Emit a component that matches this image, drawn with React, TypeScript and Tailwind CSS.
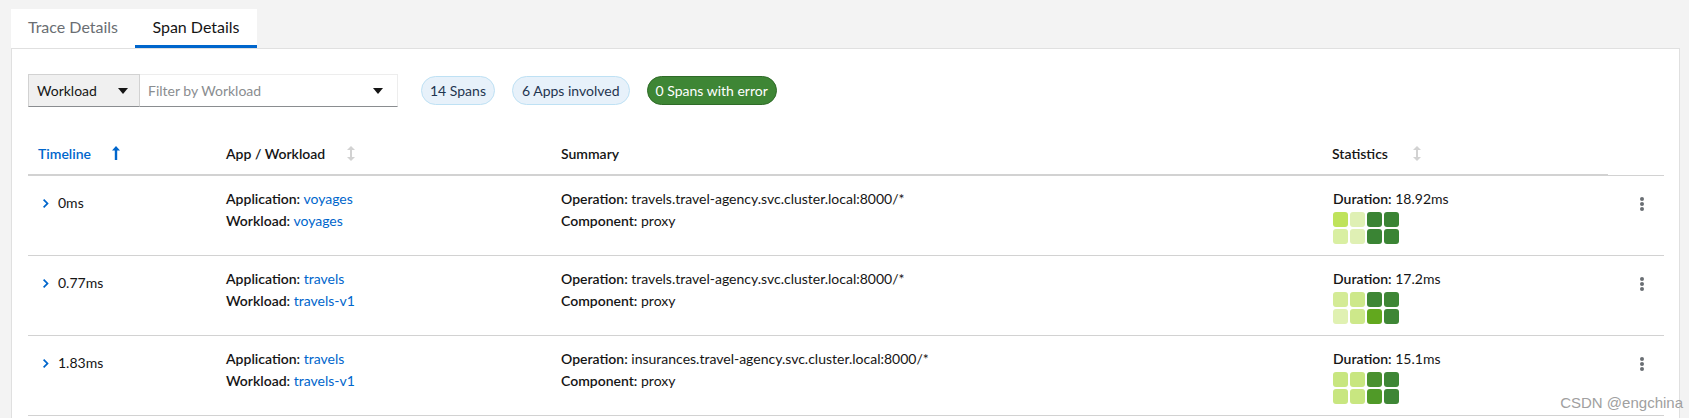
import React from 'react';

type Span = {
  time: string;
  app: string;
  workload: string;
  operation: string;
  duration: string;
  heat: string[];
};

const spans: Span[] = [
  {
    time: '0ms',
    app: 'voyages',
    workload: 'voyages',
    operation: 'travels.travel-agency.svc.cluster.local:8000/*',
    duration: '18.92ms',
    heat: ['#bfe35b', '#dff0b4', '#3a8434', '#3a8434', '#d9efa2', '#dff0b4', '#3a8434', '#3a8434'],
  },
  {
    time: '0.77ms',
    app: 'travels',
    workload: 'travels-v1',
    operation: 'travels.travel-agency.svc.cluster.local:8000/*',
    duration: '17.2ms',
    heat: ['#d4eb96', '#cde88a', '#3e8635', '#3e8635', '#e0f1b2', '#cde88a', '#62a81e', '#3e8635'],
  },
  {
    time: '1.83ms',
    app: 'travels',
    workload: 'travels-v1',
    operation: 'insurances.travel-agency.svc.cluster.local:8000/*',
    duration: '15.1ms',
    heat: ['#c8e680', '#c8e680', '#4a912f', '#3e8635', '#c8e680', '#c8e680', '#509a28', '#3e8635'],
  },
];

function Caret() {
  return (
    <svg width="10" height="6" viewBox="0 0 10 6">
      <path d="M0 0h10L5 6z" fill="#151515" />
    </svg>
  );
}

function SortIcon() {
  return (
    <svg width="8" height="15" viewBox="0 0 8 15" className="text-[#d2d2d2]">
      <path d="M4 0L0 4h3v7H0l4 4 4-4H5V4h3z" fill="currentColor" />
    </svg>
  );
}

function ArrowUp() {
  return (
    <svg width="8" height="14" viewBox="0 0 8 14" className="text-[#0066cc]">
      <path d="M4 0L0 4.5h2.8V14h2.4V4.5H8z" fill="currentColor" />
    </svg>
  );
}

function Chevron() {
  return (
    <svg width="6" height="9" viewBox="0 0 6 9">
      <path d="M1.2 0L0 1.2 3.3 4.5 0 7.8 1.2 9l4.5-4.5z" fill="#0066cc" />
    </svg>
  );
}

function Kebab() {
  return (
    <div className="flex flex-col items-center gap-[1.5px]">
      <span className="h-[3.5px] w-[3.5px] rounded-full bg-[#6a6e73]" />
      <span className="h-[3.5px] w-[3.5px] rounded-full bg-[#6a6e73]" />
      <span className="h-[3.5px] w-[3.5px] rounded-full bg-[#6a6e73]" />
    </div>
  );
}

const cols = 'grid grid-cols-[188px_335px_771px_286px_56px]';

export default function App() {
  return (
    <div
      className="relative min-h-[418px] bg-[#f3f3f3] pl-[11px] pr-[9px] pt-[9px] text-[14px] text-[#151515]"
      style={{ fontFamily: 'Lato, "Noto Sans", sans-serif' }}
    >
      <div className="flex w-[246px] bg-white text-[16px]">
        <div className="flex h-[39px] w-[124px] items-center justify-center pb-[3px] text-[#6a6e73]">
          Trace Details
        </div>
        <div className="flex h-[39px] w-[122px] items-center justify-center border-b-[3px] border-[#0066cc]">
          Span Details
        </div>
      </div>

      <div className="min-h-[370px] border-x border-t border-[#e0e0e0] bg-white pl-[16px] pr-[15px] pt-[25px]">
        <div className="flex items-center">
          <div className="flex h-[33px] w-[112px] items-center justify-between border border-b-[#8a8d90] border-[#d2d2d2] bg-[#f0f0f0] pl-[8px] pr-[11px]">
            <span>Workload</span>
            <Caret />
          </div>
          <div className="flex h-[33px] w-[258px] items-center justify-between border border-l-0 border-b-[#8a8d90] border-[#ededed] pl-[8px] pr-[14px]">
            <span className="text-[#8a8d90]">Filter by Workload</span>
            <Caret />
          </div>
          <div className="ml-[23px] flex items-center gap-[17px]">
            <span className="flex h-[29px] items-center rounded-full border border-[#bee1f4] bg-[#e7f1fa] px-[8px] text-[#1f3550]">
              14 Spans
            </span>
            <span className="flex h-[29px] items-center rounded-full border border-[#bee1f4] bg-[#e7f1fa] px-[9px] text-[#1f3550]">
              6 Apps involved
            </span>
            <span className="flex h-[29px] items-center rounded-full border border-[#2f6b28] bg-[#3e8635] px-[8px] text-white">
              0 Spans with error
            </span>
          </div>
        </div>

        <div className="mt-[13px]">
          <div className={`${cols} h-[56px] font-semibold`}>
            <div className="flex h-full items-center gap-[21px] border-b-2 border-[#d2d2d2] pl-[10px] pt-[12px] text-[#0066cc]">
              Timeline
              <ArrowUp />
            </div>
            <div className="flex h-full items-center gap-[22px] border-b-2 border-[#d2d2d2] pl-[10px] pt-[12px]">
              App / Workload
              <SortIcon />
            </div>
            <div className="flex h-full items-center border-b-2 border-[#d2d2d2] pl-[10px] pt-[12px]">Summary</div>
            <div className="flex h-full items-center gap-[25px] border-b-2 border-[#d2d2d2] pl-[10px] pt-[12px]">
              Statistics
              <SortIcon />
            </div>
            <div className="h-full border-b border-[#d2d2d2]" />
          </div>

          {spans.map((s, i) => (
            <div key={i} className={`${cols} h-[80px] border-b border-[#d2d2d2] pt-[12px] leading-[22px]`}>
              <div className="flex items-center gap-[9px] self-start pl-[15px] pt-[4px]">
                <Chevron />
                <span>{s.time}</span>
              </div>
              <div className="pl-[10px]">
                <div>
                  <span className="font-semibold">Application:</span>{' '}
                  <span className="text-[#0066cc]">{s.app}</span>
                </div>
                <div>
                  <span className="font-semibold">Workload:</span>{' '}
                  <span className="text-[#0066cc]">{s.workload}</span>
                </div>
              </div>
              <div className="pl-[10px]">
                <div>
                  <span className="font-semibold">Operation:</span> {s.operation}
                </div>
                <div>
                  <span className="font-semibold">Component:</span> proxy
                </div>
              </div>
              <div className="pl-[11px]">
                <div>
                  <span className="font-semibold">Duration:</span> {s.duration}
                </div>
                <div className="mt-[2px] grid w-[66px] grid-cols-4 gap-[2px]">
                  {s.heat.map((c, j) => (
                    <span key={j} className="h-[15px] w-[15px] rounded-[3px]" style={{ backgroundColor: c }} />
                  ))}
                </div>
              </div>
              <div className="flex justify-center pl-[12px] pt-[9px]">
                <Kebab />
              </div>
            </div>
          ))}
        </div>
      </div>

      <div
        className="absolute bottom-[4px] right-[6px] text-[15px] text-[#a0a0a0]"
        style={{ fontFamily: '"Liberation Sans", sans-serif' }}
      >
        CSDN @engchina
      </div>
    </div>
  );
}
